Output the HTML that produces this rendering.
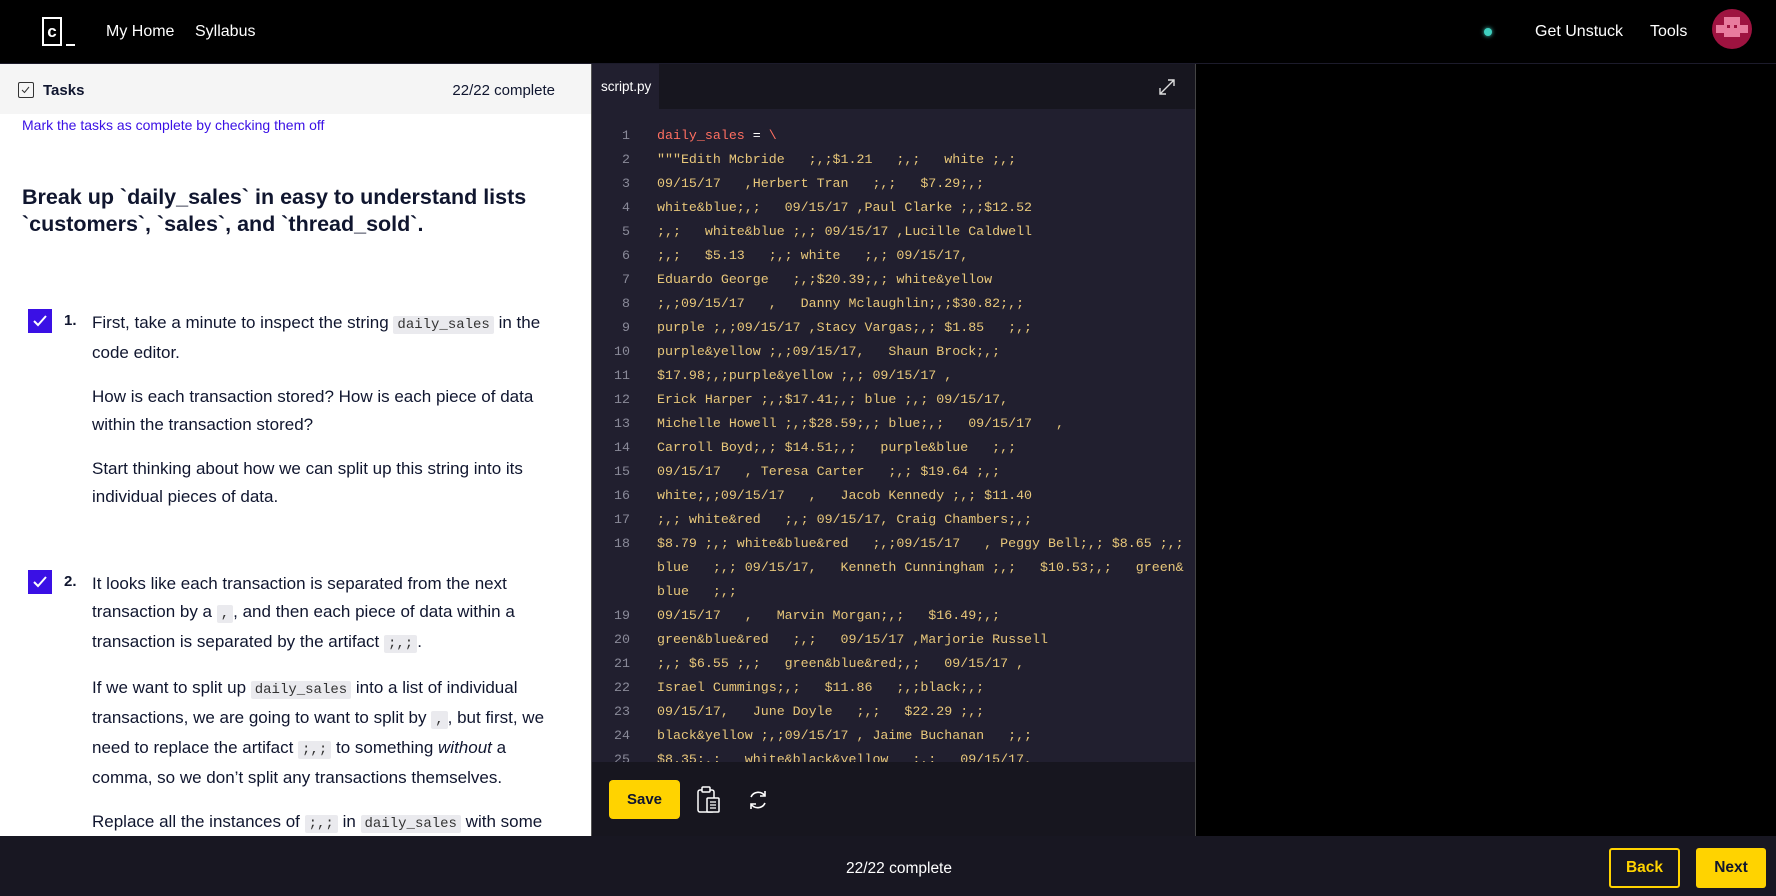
<!DOCTYPE html>
<html><head><meta charset="utf-8"><style>
*{box-sizing:border-box;margin:0;padding:0}
body{width:1776px;height:896px;overflow:hidden;background:#000;font-family:"Liberation Sans",sans-serif;position:relative}
.nav{position:absolute;left:0;top:0;width:1776px;height:64px;background:#000;border-bottom:1px solid #1c1b2b}
.nav .t{position:absolute;color:#fff;font-size:16px;top:23px}
.left{position:absolute;left:0;top:64px;width:592px;height:772px;background:#fff;overflow:hidden;border-right:1px solid #555}
.th{height:50px;background:#f5f5f5;position:relative}
.th .cb{position:absolute;left:18px;top:18px;width:16px;height:16px;border:1.5px solid #333;border-radius:2px}
.th .a{position:absolute;left:43px;top:18px;font-size:15px;font-weight:bold;color:#10162f}
.th .b{position:absolute;right:36px;top:18px;font-size:15px;color:#10162f}
.mark{position:absolute;left:22px;top:53px;font-size:14px;color:#3a10e5}
h1{position:absolute;left:22px;top:120px;font-size:21.5px;line-height:27px;color:#10162f;width:540px}
.item{position:absolute;left:0;width:592px}
.chk{position:absolute;left:28px;width:24px;height:24px;background:#3a10e5}
.num{position:absolute;left:64px;font-size:15px;font-weight:bold;color:#10162f}
.p{position:absolute;left:92px;width:470px;font-size:17px;line-height:28px;color:#10162f}
.p p{margin-bottom:16px}
code{font-family:"Liberation Mono",monospace;font-size:14px;background:#eaeaee;padding:1px 4px;border-radius:2px;color:#333}
.ed{position:absolute;left:592px;top:64px;width:604px;height:772px;background:#211f2f;border-right:1px solid #444}
.tabbar{height:45px;background:#17161f;position:relative}
.tab{position:absolute;left:0;top:0;width:67px;height:45px;background:#211f2f;color:#fff;font-size:13.5px;padding:15px 0 0 9px}
.code{position:absolute;left:0;top:60px;font-family:"Liberation Mono",monospace;font-size:13.3px;line-height:24px;white-space:pre;color:#e8c77a}
.ln{position:absolute;left:0;width:38px;text-align:right;color:#8a8a99}
.cl{position:absolute;left:65px}
.tb{position:absolute;left:0;top:698px;width:603px;height:74px;background:#17161f}
.save{position:absolute;left:17px;top:18px;width:71px;height:39px;background:#ffd300;border-radius:4px;font-weight:bold;font-size:15px;text-align:center;line-height:39px;color:#10162f}
.right{position:absolute;left:1197px;top:64px;width:579px;height:772px;background:#000}
.bot{position:absolute;left:0;top:836px;width:1776px;height:60px;background:#181722}
</style></head><body>
<div class="nav">
 <div style="position:absolute;left:42px;top:17px;width:20px;height:29px;border:2px solid #fff;color:#fff;font-weight:bold;font-size:17px;text-align:center;line-height:26px">c</div>
 <div style="position:absolute;left:66px;top:44px;width:9px;height:2px;background:#fff"></div>
 <span class="t" style="left:106px">My Home</span>
 <span class="t" style="left:195px">Syllabus</span>
 <div style="position:absolute;left:1484px;top:28px;width:8px;height:8px;border-radius:50%;background:#3fd0c0;box-shadow:0 0 4px #3fd0c0"></div>
 <span class="t" style="left:1535px">Get Unstuck</span>
 <span class="t" style="left:1650px">Tools</span>
 <div style="position:absolute;left:1712px;top:9px;width:40px;height:40px;border-radius:50%;background:#9e1340;overflow:hidden">
  <div style="position:absolute;left:12px;top:8px;width:16px;height:20px;background:#e87c9e"></div>
  <div style="position:absolute;left:4px;top:16px;width:32px;height:8px;background:#e87c9e"></div>
  <div style="position:absolute;left:15px;top:16px;width:3px;height:3px;background:#9e1340"></div>
  <div style="position:absolute;left:22px;top:16px;width:3px;height:3px;background:#9e1340"></div>
 </div>
</div>
<div class="left">
 <div class="th"><div class="cb"><svg width="13" height="13" style="position:absolute;left:0;top:0"><path d="M3 7l2.5 2.5L10 4" stroke="#333" stroke-width="1" fill="none"/></svg></div><span class="a">Tasks</span><span class="b">22/22 complete</span></div>
 <div class="mark">Mark the tasks as complete by checking them off</div>
 <h1>Break up `daily_sales` in easy to understand lists `customers`, `sales`, and `thread_sold`.</h1>
 <div class="item" style="top:245px">
  <div class="chk"><svg width="24" height="24"><path d="M6 12l4 4 8-9" stroke="#fff" stroke-width="2" fill="none"/></svg></div>
  <div class="num" style="top:3px">1.</div>
  <div class="p" style="top:0"><p>First, take a minute to inspect the string <code>daily_sales</code> in the code editor.</p><p>How is each transaction stored? How is each piece of data within the transaction stored?</p><p>Start thinking about how we can split up this string into its individual pieces of data.</p></div>
 </div>
 <div class="item" style="top:506px">
  <div class="chk"><svg width="24" height="24"><path d="M6 12l4 4 8-9" stroke="#fff" stroke-width="2" fill="none"/></svg></div>
  <div class="num" style="top:3px">2.</div>
  <div class="p" style="top:0"><p>It looks like each transaction is separated from the next transaction by a <code>,</code>, and then each piece of data within a transaction is separated by the artifact <code>;,;</code>.</p><p>If we want to split up <code>daily_sales</code> into a list of individual transactions, we are going to want to split by <code>,</code>, but first, we need to replace the artifact <code>;,;</code> to something <i>without</i> a comma, so we don’t split any transactions themselves.</p><p>Replace all the instances of <code>;,;</code> in <code>daily_sales</code> with some other character and save the result to</p></div>
 </div>
</div>
<div class="ed">
 <div class="tabbar"><div class="tab">script.py</div>
  <svg style="position:absolute;left:566px;top:14px" width="18" height="18"><path d="M2 16L16 2M10 2h6v6M2 10v6h6" stroke="#ddd" stroke-width="1.4" fill="none"/></svg>
 </div>
 <div class="code">
<div class="ln" style="top:0">1</div><div class="cl" style="top:0"><span style="color:#ff6f61">daily_sales</span><span style="color:#fff"> = </span><span style="color:#ff6f61">\</span></div>
<div class="ln" style="top:24px">2</div><div class="cl" style="top:24px">"""Edith Mcbride   ;,;$1.21   ;,;   white ;,;</div>
<div class="ln" style="top:48px">3</div><div class="cl" style="top:48px">09/15/17   ,Herbert Tran   ;,;   $7.29;,;</div>
<div class="ln" style="top:72px">4</div><div class="cl" style="top:72px">white&amp;blue;,;   09/15/17 ,Paul Clarke ;,;$12.52</div>
<div class="ln" style="top:96px">5</div><div class="cl" style="top:96px">;,;   white&amp;blue ;,; 09/15/17 ,Lucille Caldwell</div>
<div class="ln" style="top:120px">6</div><div class="cl" style="top:120px">;,;   $5.13   ;,; white   ;,; 09/15/17,</div>
<div class="ln" style="top:144px">7</div><div class="cl" style="top:144px">Eduardo George   ;,;$20.39;,; white&amp;yellow</div>
<div class="ln" style="top:168px">8</div><div class="cl" style="top:168px">;,;09/15/17   ,   Danny Mclaughlin;,;$30.82;,;</div>
<div class="ln" style="top:192px">9</div><div class="cl" style="top:192px">purple ;,;09/15/17 ,Stacy Vargas;,; $1.85   ;,;</div>
<div class="ln" style="top:216px">10</div><div class="cl" style="top:216px">purple&amp;yellow ;,;09/15/17,   Shaun Brock;,;</div>
<div class="ln" style="top:240px">11</div><div class="cl" style="top:240px">$17.98;,;purple&amp;yellow ;,; 09/15/17 ,</div>
<div class="ln" style="top:264px">12</div><div class="cl" style="top:264px">Erick Harper ;,;$17.41;,; blue ;,; 09/15/17,</div>
<div class="ln" style="top:288px">13</div><div class="cl" style="top:288px">Michelle Howell ;,;$28.59;,; blue;,;   09/15/17   ,</div>
<div class="ln" style="top:312px">14</div><div class="cl" style="top:312px">Carroll Boyd;,; $14.51;,;   purple&amp;blue   ;,;</div>
<div class="ln" style="top:336px">15</div><div class="cl" style="top:336px">09/15/17   , Teresa Carter   ;,; $19.64 ;,;</div>
<div class="ln" style="top:360px">16</div><div class="cl" style="top:360px">white;,;09/15/17   ,   Jacob Kennedy ;,; $11.40</div>
<div class="ln" style="top:384px">17</div><div class="cl" style="top:384px">;,; white&amp;red   ;,; 09/15/17, Craig Chambers;,;</div>
<div class="ln" style="top:408px">18</div><div class="cl" style="top:408px">$8.79 ;,; white&amp;blue&amp;red   ;,;09/15/17   , Peggy Bell;,; $8.65 ;,;
blue   ;,; 09/15/17,   Kenneth Cunningham ;,;   $10.53;,;   green&amp;
blue   ;,;</div>
<div class="ln" style="top:480px">19</div><div class="cl" style="top:480px">09/15/17   ,   Marvin Morgan;,;   $16.49;,;</div>
<div class="ln" style="top:504px">20</div><div class="cl" style="top:504px">green&amp;blue&amp;red   ;,;   09/15/17 ,Marjorie Russell</div>
<div class="ln" style="top:528px">21</div><div class="cl" style="top:528px">;,; $6.55 ;,;   green&amp;blue&amp;red;,;   09/15/17 ,</div>
<div class="ln" style="top:552px">22</div><div class="cl" style="top:552px">Israel Cummings;,;   $11.86   ;,;black;,;</div>
<div class="ln" style="top:576px">23</div><div class="cl" style="top:576px">09/15/17,   June Doyle   ;,;   $22.29 ;,;</div>
<div class="ln" style="top:600px">24</div><div class="cl" style="top:600px">black&amp;yellow ;,;09/15/17 , Jaime Buchanan   ;,;</div>
<div class="ln" style="top:624px">25</div><div class="cl" style="top:624px">$8.35;,;   white&amp;black&amp;yellow   ;,;   09/15/17,</div>
 </div>
 <div class="tb">
  <div class="save">Save</div>
  <svg style="position:absolute;left:104px;top:24px" width="26" height="28"><rect x="2" y="4" width="16" height="22" rx="2" stroke="#fff" stroke-width="1.5" fill="none"/><rect x="6" y="1" width="8" height="5" rx="1" stroke="#fff" stroke-width="1.5" fill="#17161f"/><rect x="11" y="12" width="12" height="14" rx="1" stroke="#fff" stroke-width="1.5" fill="#17161f"/><path d="M14 16h6M14 19h6M14 22h6" stroke="#fff" stroke-width="1.2"/></svg>
  <svg style="position:absolute;left:154px;top:26px" width="24" height="24"><path d="M19 8A8 8 0 0 0 5 9M5 16a8 8 0 0 0 14-1" stroke="#fff" stroke-width="1.6" fill="none"/><path d="M19 3v5h-5M5 21v-5h5" stroke="#fff" stroke-width="1.6" fill="none"/></svg>
 </div>
</div>
<div class="right"></div>
<div class="bot">
 <div style="position:absolute;left:846px;top:24px;color:#fff;font-size:15.5px">22/22 complete</div>
 <div style="position:absolute;left:1609px;top:12px;width:71px;height:40px;border:2px solid #ffd300;border-radius:3px;color:#ffd300;font-weight:bold;font-size:15.5px;text-align:center;line-height:36px">Back</div>
 <div style="position:absolute;left:1696px;top:12px;width:70px;height:40px;background:#ffd300;border-radius:3px;color:#10162f;font-weight:bold;font-size:15.5px;text-align:center;line-height:40px">Next</div>
</div>
</body></html>
